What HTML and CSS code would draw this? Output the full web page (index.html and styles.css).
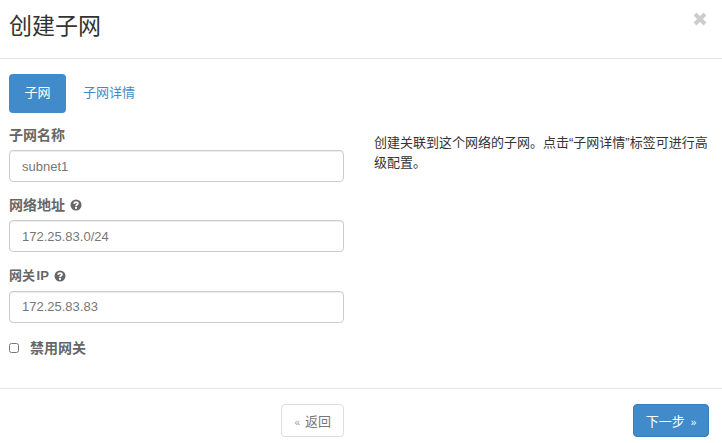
FILE: index.html
```html
<!DOCTYPE html>
<html lang="zh-CN">
<head>
  <meta charset="UTF-8">
  <title>创建子网</title>
  <link rel="stylesheet" href="styles.css">
</head>
<body>
  <div class="modal">
    <header class="modal-header">
      <h3>创建子网</h3>
      <button class="close" aria-label="关闭">
        <svg width="14" height="14" viewBox="0 0 14 14"><path d="M2 2L12 12M12 2L2 12"/></svg>
      </button>
    </header>

    <div class="modal-body">
      <ul class="tabs">
        <li class="active">子网</li>
        <li>子网详情</li>
      </ul>
      <div class="columns">
        <form class="form">
          <div class="form-group">
            <label>子网名称</label>
            <input type="text" value="subnet1">
          </div>
          <div class="form-group">
            <label>网络地址
              <svg class="help" width="12" height="12" viewBox="0 0 12 12"><circle cx="6" cy="6" r="5.5"/><path d="M4.2 4.7C4.2 2.6 7.9 2.6 7.9 4.6C7.9 5.8 6 5.8 6 7.2"/><rect x="5" y="8" width="2" height="1.8"/></svg>
            </label>
            <input type="text" value="172.25.83.0/24">
          </div>
          <div class="form-group">
            <label class="label-ip">网关 IP
              <svg class="help" width="12" height="12" viewBox="0 0 12 12"><circle cx="6" cy="6" r="5.5"/><path d="M4.2 4.7C4.2 2.6 7.9 2.6 7.9 4.6C7.9 5.8 6 5.8 6 7.2"/><rect x="5" y="8" width="2" height="1.8"/></svg>
            </label>
            <input type="text" value="172.25.83.83">
          </div>
          <label class="checkbox"><input type="checkbox">禁用网关</label>
        </form>
        <p class="help-text">创建关联到这个网络的子网。点击“子网详情”标签可进行高级配置。</p>
      </div>
    </div>

    <footer class="modal-footer">
      <div class="footer-left"><button class="btn"><span class="arrow arrow-back">«</span>返回</button></div>
      <div class="footer-right"><button class="btn btn-primary">下一步<span class="arrow arrow-next">»</span></button></div>
    </footer>
  </div>
</body>
</html>
```

FILE: styles.css
```css
* {
  box-sizing: border-box;
}
body {
  margin: 0;
  font-family: "Liberation Sans", "Noto Sans CJK SC", sans-serif;
  font-size: 13px;
  line-height: 20px;
  color: #333;
  background: #fff;
}
.modal {
  width: 722px;
  height: 443px;
  overflow: hidden;
}
.modal-header {
  display: flex;
  justify-content: space-between;
  height: 59px;
  padding: 10px 15px 0 9px;
  border-bottom: 1px solid #e5e5e5;
}
.modal-header h3 {
  margin: 0;
  font-size: 23px;
  font-weight: 400;
  line-height: 33px;
}
.close {
  width: 14px;
  height: 14px;
  margin-top: 2px;
  padding: 0;
  border: 0;
  background: none;
}
.close svg {
  display: block;
}
.close path {
  fill: none;
  stroke: #ccc;
  stroke-width: 4;
}
.modal-body {
  height: 329px;
  padding: 15px 13px 0 9px;
}
.tabs {
  display: flex;
  gap: 2px;
  margin: 0 0 12px;
  padding: 0;
  list-style: none;
}
.tabs li {
  height: 39px;
  padding: 9px 15px;
  border-radius: 4px;
  color: #428bca;
}
.tabs li.active {
  flex: 0 0 57px;
  padding: 9px 0;
  text-align: center;
  color: #fff;
  background: #428bca;
}
.columns {
  display: flex;
  gap: 30px;
}
.form {
  flex: 0 0 335px;
}
.form-group {
  margin-bottom: 13.4px;
}
.form-group label {
  display: flex;
  align-items: center;
  gap: 5px;
  height: 20px;
  margin-bottom: 5px;
  font-size: 14px;
  font-weight: 700;
  color: #666;
}
.form-group .label-ip {
  font-size: 13px;
  word-spacing: -2px;
}
.help circle {
  fill: #666;
}
.help path {
  fill: none;
  stroke: #fff;
  stroke-width: 1.8;
}
.help rect {
  fill: #fff;
}
.form-group input {
  display: block;
  width: 100%;
  height: 32px;
  padding: 6px 12px;
  border: 1px solid #ccc;
  border-radius: 4px;
  box-shadow: inset 0 1px 1px rgba(0, 0, 0, 0.075);
  font: 13px "Liberation Sans", sans-serif;
  color: #777;
}
.checkbox {
  display: flex;
  align-items: center;
  margin-top: 15px;
  font-size: 14px;
  font-weight: 700;
  color: #666;
}
.checkbox input {
  width: 10px;
  height: 10px;
  margin: 0 11px 0 0;
}
.help-text {
  flex: 1;
  margin: 8px 0 0;
  color: #333;
}
.modal-footer {
  display: flex;
  height: 55px;
  padding-top: 15px;
  border-top: 1px solid #e5e5e5;
}
.footer-left {
  flex: 0 0 344px;
  text-align: right;
}
.footer-right {
  flex: 0 0 365px;
  text-align: right;
}
.btn {
  height: 33px;
  padding: 0 12px;
  border: 1px solid #ddd;
  border-radius: 4px;
  background: #fff;
  font: 13px "Liberation Sans", "Noto Sans CJK SC", sans-serif;
  color: #777;
}
.btn-primary {
  width: 76px;
  padding: 0;
  border-color: #357ebd;
  background: #428bca;
  color: #fff;
}
.arrow {
  font-size: 10px;
}
.arrow-back {
  margin-right: 5px;
  color: #999;
}
.arrow-next {
  margin-left: 6px;
}
```
